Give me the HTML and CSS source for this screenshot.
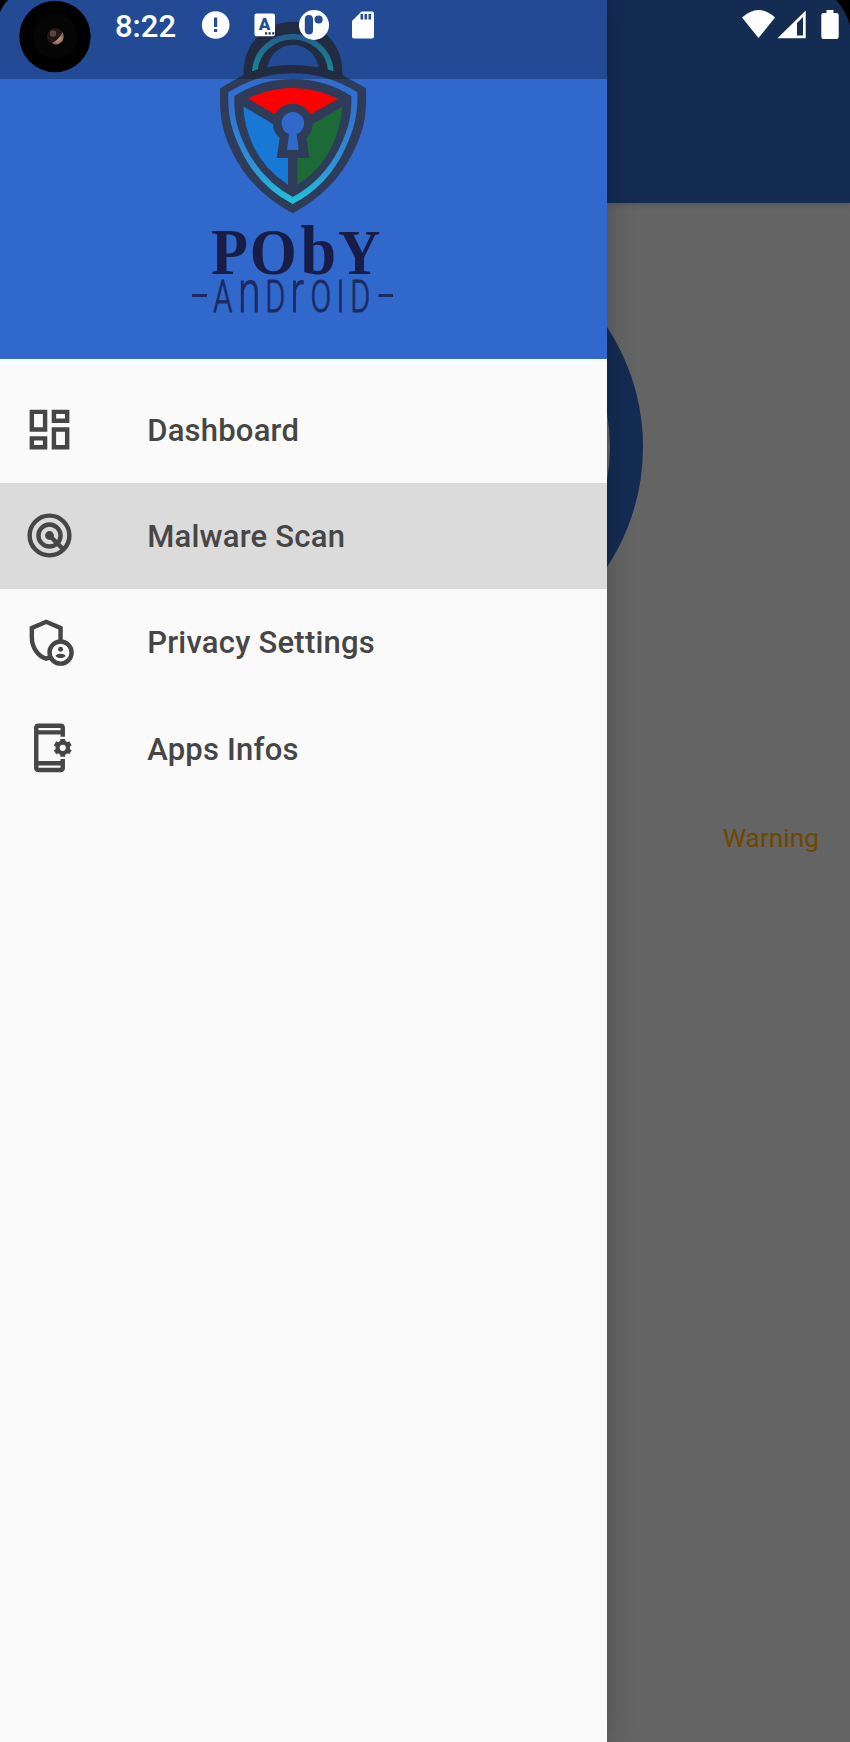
FILE: index.html
```html
<!DOCTYPE html>
<html lang="en">
<head>
<meta charset="utf-8">
<title>POBY Android</title>
<link rel="stylesheet" href="styles.css">
</head>
<body>
<div class="screen">
  <aside class="drawer">
    <header class="drawer-header">
      <svg class="logo" viewBox="0 0 607 359" role="img" aria-label="POBY Android">
        <defs>
          <linearGradient id="rim" x1="0" y1="190" x2="0" y2="582" gradientUnits="userSpaceOnUse">
            <stop offset="0" stop-color="#316ad0"/><stop offset=".3" stop-color="#3174d2"/><stop offset=".7" stop-color="#3090d6"/><stop offset="1" stop-color="#1fc5d9"/>
          </linearGradient>
          <linearGradient id="arc" x1="0" y1="60" x2="0" y2="190" gradientUnits="userSpaceOnUse">
            <stop offset="0" stop-color="#3079c6"/><stop offset=".45" stop-color="#2b98c3"/><stop offset="1" stop-color="#20b9c7"/>
          </linearGradient>
        </defs>
        <g transform="translate(200 10) scale(.33333)">
          <path fill="#2e3c5a" d="M131 215V182a148 147 0 0 1 296 0V215H356V182a77 77 0 0 0-154 0V215Z"/>
          <path fill="none" stroke="url(#arc)" stroke-width="17" d="M165 183V178a114 108 0 0 1 227 0V183"/>
          <path fill="#2e3c5a" d="M60 235L130 195Q190 165 278 165T427 195L498 235C501 315 492 362 460 425Q405 541 278 610Q151 541 96 425C65 362 58 315 60 235Z"/>
          <path fill="url(#rim)" d="M85 247Q175 190 278 190T472 247C474 309 464 357 435 416Q385 526 278 582Q171 526 121 416C92 357 83 309 85 247Z"/>
          <path fill="#2e3c5a" d="M103 258Q182 207 278 207T454 258C456 315 445 357 420 410Q373 509 278 561Q184 509 136 410C111 357 101 315 103 258Z"/>
          <path fill="red" d="M144 265Q208 234 278 234T414 267L331 313Q314 281 278 281T224 313Z"/>
          <path fill="#1878d5" d="M130 289L219 342Q219 367 239 384L230 444H264V524Q195 481 160 408Q132 348 130 289Z"/>
          <path fill="#1c6a38" d="M427 290L338 342Q338 367 319 384L328 444H292V524Q361 481 396 408Q424 348 427 290Z"/>
          <path fill="#3068cc" d="M267 372A34 34 0 1 1 290 372L296 420H261Z"/>
        </g>
        <g transform="scale(.93 1)">
          <text class="brand" y="274" x="227 268.500 323 363.500">PO<tspan class="brand-b">b</tspan><tspan class="brand-y">Y</tspan></text>
        </g>
        <g transform="scale(.68 1)">
          <text class="brand-sub" y="311.800" x="313.500 350 390 427 456.500 495 515"><tspan>A</tspan><tspan class="tall">n</tspan><tspan>D</tspan><tspan class="tall">r</tspan><tspan>OID</tspan></text>
        </g>
        <path stroke="#1d2a60" stroke-width="3" d="M192 295.500H207M378.500 295.500H393"/>
      </svg>
    </header>
    <nav class="menu">
      <a class="item">
        <svg class="icon" viewBox="0 0 24 24"><path d="M19 5v2h-4V5h4M9 5v6H5V5h4m10 8v6h-4v-6h4M9 17v2H5v-2h4M21 3h-8v6h8V3zM11 3H3v10h8V3zm10 8h-8v10h8V11zm-10 4H3v6h8v-6z"/></svg>
        <span>Dashboard</span>
      </a>
      <a class="item selected">
        <svg class="icon" viewBox="0 0 24 24"><g fill="none" stroke="#464646" stroke-width="2"><circle cx="12" cy="12" r="9"/><circle cx="12" cy="12" r="5"/><path d="M12 12l6.500 6.500"/></g><circle cx="12" cy="12" r="2"/></svg>
        <span>Malware Scan</span>
      </a>
      <a class="item">
        <svg class="icon" viewBox="0 0 24 24"><g fill="none" stroke="#464646" stroke-width="2"><path d="M17 12V5.900L10.500 3.100 4 5.900V10.200C4 14.500 6.700 18.700 10.500 19.800L12 19.200"/><circle cx="17" cy="17" r="5"/></g><circle cx="17" cy="15.500" r="1.120"/><path d="M17 17.500c-.73 0-2.190.36-2.240 1.080.5.710 1.320.92 2.240.92s1.740-.21 2.240-.92c-.05-.72-1.510-1.080-2.240-1.080z"/></svg>
        <span>Privacy Settings</span>
      </a>
      <a class="item">
        <svg class="icon" viewBox="0 0 24 24"><g transform="translate(0 -.3)"><path fill="none" stroke="#464646" stroke-width="2" d="M18 7V3Q18 2 17 2H7Q6 2 6 3V21Q6 22 7 22H17Q18 22 18 21V17M6 5H18M6 19H18"/><circle cx="18" cy="12" r="2.350" fill="none" stroke="#464646" stroke-width="1.900"/><path fill="none" stroke="#464646" stroke-width="2.200" d="M18 8v1.500M18 14.500V16M14.500 10l1.400.8M20.100 13.200l1.400.8M14.500 14l1.400-.8M20.100 10.800l1.400-.8"/></g></svg>
        <span>Apps Infos</span>
      </a>
    </nav>
  </aside>
  <main class="content">
    <div class="app-bar"></div>
    <div class="chart"><div class="ring"></div></div>
    <div class="warning">Warning</div>
  </main>
  <div class="status-bar">
    <div class="scrim"></div>
    <svg class="status-art" viewBox="0 0 850 80">
      <defs><radialGradient id="lens"><stop offset="0" stop-color="#c9a589"/><stop offset="1" stop-color="#8a6a58"/></radialGradient></defs>
      <path d="M0 0H8Q3 5 0 12ZM836 0H850V25Q846 11 836 0Z"/>
      <circle cx="55" cy="36.500" r="35.700"/><circle cx="55" cy="36.500" r="22.500" fill="#050505"/>
      <circle cx="55.500" cy="36.500" r="8.500" fill="#211714"/><path fill="url(#lens)" d="M52 43Q59 40 62.500 32Q65 37 62 41.500Q57 46.500 52 43Z"/><circle cx="53" cy="33.500" r="3.200" fill="#5b443d"/>
      <g fill="#fff">
        <circle cx="215.700" cy="25" r="13.800"/>
        <rect x="254.500" y="13.500" width="20.500" height="22.700" rx="2"/>
        <circle cx="314" cy="25" r="15"/>
        <path d="M361.500 11.500H372Q374 11.500 374 13.500V36.500Q374 38.500 372 38.500H354Q352 38.500 352 36.500V21Z"/>
        <path d="M742 17.500Q758.500 2.500 775 17.500L758.500 38Z"/>
        <path fill-rule="evenodd" d="M777.500 38.300L805.700 10.500V38.300ZM797 23V35.500H803V17Z"/>
        <path d="M826.500 10H833.500V13H836.500Q838.700 13 838.700 15V36.500Q838.700 39 836.500 39H823.500Q821.300 39 821.300 36.500V15Q821.300 13 823.500 13H826.500Z"/>
      </g>
      <g fill="#244d93">
        <path d="M214 17.500h3.200v9.500H214zM214 29h3.200v3H214zM360.500 14h2.600v5.500h-2.600zM364.500 14h2.600v5.500h-2.600zM368.500 14h2.600v5.500h-2.600z"/>
        <rect x="304.800" y="15" width="8.200" height="19.500" rx="4.100"/><circle cx="318.600" cy="19.500" r="4.100"/>
        <text class="badge" x="264.500" y="29.800">A</text>
        <path fill="#1f2a44" d="M265 32.200h2.200v2.200H265zM268.600 32.200h2.200v2.200h-2.200zM272.200 32.200h2.200v2.200h-2.200z"/>
      </g>
    </svg>
    <span class="clock">8:22</span>
  </div>
</div>
</body>
</html>
```
FILE: styles.css
```css
body { margin: 0; font-family: Roboto, "Noto Sans", sans-serif; }
.screen { position: relative; display: grid; grid-template-columns: 607px 243px; width: 850px; height: 1742px; overflow: hidden; background: #646464; }
.drawer { position: relative; z-index: 1; background: #fafafa; box-shadow: 0 0 26px rgba(0, 0, 0, .22); }
.drawer-header { height: 359px; background: #3068cc; }
.logo { display: block; width: 607px; height: 359px; }
.brand { font: bold 65px "Liberation Serif", serif; fill: #181d47; }
.brand-b { font-size: 69px; }
.brand-y { font-size: 63px; }
.brand-sub { font: 300 45px Roboto, sans-serif; fill: #1d2a60; stroke: #1d2a60; stroke-width: .9px; }
.tall { font-size: 60px; }
.menu { display: flex; flex-direction: column; padding-top: 17.500px; }
.item { display: flex; align-items: center; gap: 71.200px; height: 106.200px; padding-left: 23px; box-sizing: border-box; color: #464646; font-size: 31px; font-weight: 500; line-height: 36px; letter-spacing: .22px; }
.item span { padding-top: 3px; }
.item.selected { background: #dbdbdb; }
.icon { width: 53px; height: 53px; flex: none; fill: #464646; }
.content { height: 1742px; overflow: hidden; }
.app-bar { height: 203px; background: #142b52; box-shadow: 0 1px 6px rgba(0, 0, 0, .2); }
.chart { display: flex; justify-content: flex-end; width: 36px; height: 436px; margin-top: 26px; }
.ring { flex: none; box-sizing: border-box; width: 436px; height: 436px; border: 33.500px solid #142b52; border-radius: 50%; }
.warning { margin-top: 157px; padding-right: 31px; text-align: right; font-size: 26.300px; line-height: 32px; color: #704700; }
.status-bar { position: absolute; z-index: 2; top: 0; left: 0; width: 850px; height: 80px; }
.scrim { width: 607px; height: 79px; background: rgba(0, 0, 0, .27); }
.status-art { position: absolute; top: 0; left: 0; width: 850px; height: 80px; }
.badge { font: 900 17px Roboto, sans-serif; text-anchor: middle; }
.clock { position: absolute; left: 115px; top: 8.500px; font-size: 31px; line-height: 36px; font-weight: 500; color: #fff; }
```
